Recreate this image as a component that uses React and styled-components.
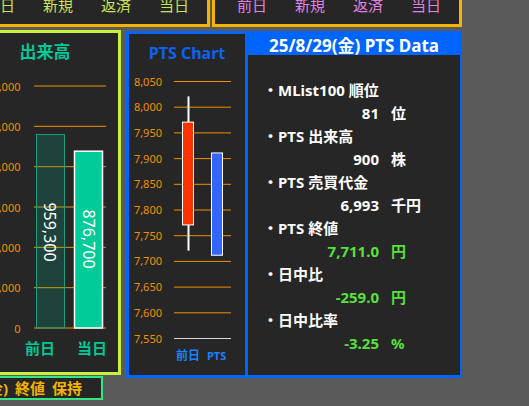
import React from 'react';
import styled, { createGlobalStyle } from 'styled-components';

const GlobalStyle = createGlobalStyle`
  html, body {
    margin: 0;
    padding: 0;
    background: #5a5a5a;
    overflow: hidden;
    font-family: "Noto Sans", "Noto Sans CJK JP", sans-serif;
  }
`;

const Page = styled.div`
  display: flex;
  flex-direction: column;
  gap: 3px;
  margin: -20px 0 0 -40px;
`;

const TopRow = styled.div`
  display: flex;
  gap: 2px;
`;

const TopPanel = styled.div`
  box-sizing: border-box;
  width: 250px;
  display: flex;
  gap: 28px;
  padding: 12px 0 9px 22px;
  border: 3px solid #f5b400;
  background: #262626;
  color: ${p => p.color};
  font-size: 15px;
  line-height: 20px;
`;

const MainRow = styled.div`
  display: flex;
  gap: 5px;
  align-items: flex-start;
`;

const LeftColumn = styled.div`
  display: flex;
  flex-direction: column;
  gap: 1px;
  width: 161px;
`;

const VolumePanel = styled.div`
  box-sizing: border-box;
  height: 345px;
  display: flex;
  flex-direction: column;
  border: 3px solid #c8f03c;
  background: #262626;
`;

const PanelTitle = styled.div`
  margin-top: 8px;
  height: 22px;
  line-height: 22px;
  padding-left: ${p => p.shift || 0}px;
  text-align: center;
  font-size: ${p => p.size || 16}px;
  font-weight: bold;
  color: ${p => p.color};
`;

const Plot = styled.svg`
  display: block;
  overflow: visible;
`;

const XLabels = styled.div`
  display: flex;
  align-items: center;
  gap: ${p => p.gap}px;
  padding-left: ${p => p.offset}px;
  height: 20px;
  margin-top: ${p => p.top || 0}px;
  font-weight: bold;
  color: ${p => p.color};
`;

const XLabel = styled.span`
  font-size: ${p => p.size}px;
  line-height: 20px;
`;

const HoldStrip = styled.div`
  box-sizing: border-box;
  width: 143px;
  height: 24px;
  padding-right: 19px;
  border: 2px solid #33e680;
  background: #262626;
  text-align: right;
  color: #f0b400;
  font-size: 15px;
  font-weight: bold;
  line-height: 20px;
  word-spacing: 3px;
  white-space: nowrap;
`;

const BlueFrame = styled.div`
  box-sizing: border-box;
  margin-top: 1px;
  width: 336px;
  height: 347px;
  display: flex;
  gap: 3px;
  padding: 3px 2px 3px 3px;
  background: #0064ff;
`;

const ChartPanel = styled.div`
  width: 116px;
  display: flex;
  flex-direction: column;
  background: #262626;
`;

const DataColumn = styled.div`
  flex: 1;
  display: flex;
  flex-direction: column;
`;

const DataHeader = styled.div`
  height: 21px;
  line-height: 23px;
  text-align: center;
  color: #fff;
  font-size: 17px;
  font-weight: bold;
  white-space: nowrap;
`;

const DataBody = styled.div`
  flex: 1;
  padding: 24px 0 0 15px;
  background: #262626;
`;

const ItemLabel = styled.div`
  line-height: 23px;
  color: #fff;
  font-size: 15px;
  font-weight: bold;
  white-space: nowrap;
`;

const ValueRow = styled.div`
  display: flex;
  line-height: 23px;
  font-size: 15px;
  font-weight: bold;
  color: ${p => (p.good ? '#58e03c' : '#fff')};
`;

const ValueNum = styled.span`
  width: 116px;
  text-align: right;
`;

const Unit = styled.span`
  margin-left: 12px;
`;

const ORANGE = '#f09000';

const volTicks = [1200000, 1000000, 800000, 600000, 400000, 200000, 0];
const volY = v => 265 - (v / 200000) * 40.33;

const VolumeChart = () => (
  <Plot width="155" height="275">
    {volTicks.map(v => (
      <g key={v}>
        <line x1="71" x2="143" y1={volY(v)} y2={volY(v)} stroke={ORANGE} strokeWidth="1" />
        <text x="57.5" y={volY(v)} textAnchor="end" dominantBaseline="central" fontSize="11" fill={ORANGE}>
          {v.toLocaleString('en-US')}
        </text>
      </g>
    ))}
    <rect x="73.5" y={volY(959300)} width="28" height={265 - volY(959300)}
      fill="rgba(0,200,150,0.18)" stroke="#1d9e7c" strokeWidth="1" />
    <rect x="111.5" y={volY(876700)} width="28" height={265 - volY(876700)}
      fill="#00cc99" stroke="#fff" strokeWidth="1.5" />
    <text transform="translate(87,169) rotate(90)" textAnchor="middle" dominantBaseline="central"
      fontSize="16" fill="#fff">959,300</text>
    <text transform="translate(125.5,176) rotate(90)" textAnchor="middle" dominantBaseline="central"
      fontSize="16" fill="#fff">876,700</text>
  </Plot>
);

const priceTicks = [8050, 8000, 7950, 7900, 7850, 7800, 7750, 7700, 7650, 7600, 7550];
const priceY = p => 17 + (8050 - p) * 0.514;

const CandleChart = () => (
  <Plot width="116" height="278">
    {priceTicks.map((p, i) => (
      <g key={p}>
        <line x1="45" x2="102" y1={priceY(p) + 0.5} y2={priceY(p) + 0.5}
          stroke={i === priceTicks.length - 1 ? '#d8d8d8' : ORANGE} strokeWidth="1" />
        <text x="33" y={priceY(p)} textAnchor="end" dominantBaseline="central" fontSize="11" fill={ORANGE}>
          {p.toLocaleString('en-US')}
        </text>
      </g>
    ))}
    <line x1="59.5" x2="59.5" y1={priceY(8020)} y2={priceY(7720)} stroke="#fff" strokeWidth="2" />
    <rect x="53.5" y={priceY(7970)} width="11" height={priceY(7770) - priceY(7970)}
      fill="#ff3300" stroke="#fff" strokeWidth="1" />
    <rect x="82.5" y={priceY(7910)} width="11" height={priceY(7711) - priceY(7910)}
      fill="#3366ff" stroke="#fff" strokeWidth="1" />
  </Plot>
);

const items = [
  { label: '・MList100 順位', value: '81', unit: '位' },
  { label: '・PTS 出来高', value: '900', unit: '株' },
  { label: '・PTS 売買代金', value: '6,993', unit: '千円' },
  { label: '・PTS 終値', value: '7,711.0', unit: '円', good: true },
  { label: '・日中比', value: '-259.0', unit: '円', good: true },
  { label: '・日中比率', value: '-3.25', unit: '%', good: true },
];

const tabs = ['前日', '新規', '返済', '当日'];

const App = () => (
  <>
    <GlobalStyle />
    <Page>
      <TopRow>
        <TopPanel color="#c8e05a">
          {tabs.map(t => <span key={t}>{t}</span>)}
        </TopPanel>
        <TopPanel color="#e080e0">
          {tabs.map(t => <span key={t}>{t}</span>)}
        </TopPanel>
      </TopRow>
      <MainRow>
        <LeftColumn>
          <VolumePanel>
            <PanelTitle color="#00c896" shift={9} size={17}>出来高</PanelTitle>
            <VolumeChart />
            <XLabels color="#00c896" offset={62} gap={22}>
              <XLabel size={15}>前日</XLabel>
              <XLabel size={15}>当日</XLabel>
            </XLabels>
          </VolumePanel>
          <HoldStrip>(金) 終値 保持</HoldStrip>
        </LeftColumn>
        <BlueFrame>
          <ChartPanel>
            <PanelTitle color="#0a64f0">PTS Chart</PanelTitle>
            <CandleChart />
            <XLabels color="#1a82ff" offset={47} gap={7} top={4}>
              <XLabel size={12}>前日</XLabel>
              <XLabel size={11}>PTS</XLabel>
            </XLabels>
          </ChartPanel>
          <DataColumn>
            <DataHeader>25/8/29(金) PTS Data</DataHeader>
            <DataBody>
              {items.map(it => (
                <div key={it.label}>
                  <ItemLabel>{it.label}</ItemLabel>
                  <ValueRow good={it.good}>
                    <ValueNum>{it.value}</ValueNum>
                    <Unit>{it.unit}</Unit>
                  </ValueRow>
                </div>
              ))}
            </DataBody>
          </DataColumn>
        </BlueFrame>
      </MainRow>
    </Page>
  </>
);

export default App;
